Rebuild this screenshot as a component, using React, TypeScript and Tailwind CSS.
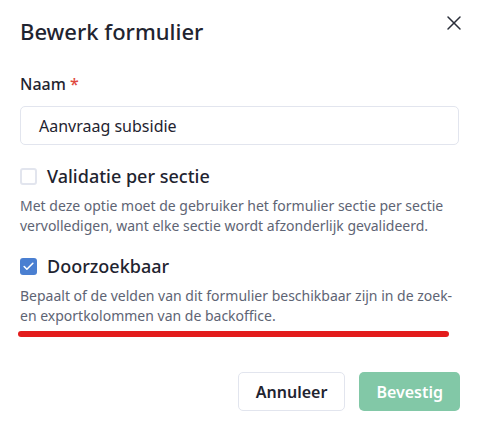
import { X, Check } from "lucide-react";

export default function App() {
  return (
    <div className="w-[479px] h-[423px] bg-white font-['Noto_Sans',sans-serif] text-[#1f2430] relative">
      <div className="px-5 pt-[15px]">
        <div className="flex items-start justify-between">
          <h1 className="text-[22px] leading-[32px] font-medium">Bewerk formulier</h1>
          <button className="mt-[-4px] mr-[-7px] text-[#2b2f3a]">
            <X size={24} strokeWidth={1.5} />
          </button>
        </div>

        <div className="mt-[26px]">
          <label className="block text-[16px] leading-[22px] font-medium">
            Naam <span className="text-[#e0483e]">*</span>
          </label>
          <div className="mt-[11px] h-[39px] border border-[#e2e5ee] rounded-[5px] flex items-center px-[18px] text-[16px]">
            Aanvraag subsidie
          </div>
        </div>

        <div className="mt-[18px]">
          <div className="flex items-center gap-[10px]">
            <div className="w-[17px] h-[17px] border-2 border-[#e2e5ee] rounded-[3px]" />
            <span className="text-[18px] leading-[26px] font-medium">Validatie per sectie</span>
          </div>
          <p className="mt-[7px] text-[14px] leading-[20px] text-[#5e6474]">
            Met deze optie moet de gebruiker het formulier sectie per sectie vervolledigen, want elke sectie wordt afzonderlijk gevalideerd.
          </p>
        </div>

        <div className="mt-[17px]">
          <div className="flex items-center gap-[10px]">
            <div className="w-[17px] h-[17px] bg-[#4a7fd1] rounded-[3px] flex items-center justify-center text-white">
              <Check size={13} strokeWidth={3} />
            </div>
            <span className="text-[18px] leading-[26px] font-medium">Doorzoekbaar</span>
          </div>
          <p className="mt-[7px] text-[14px] leading-[20px] text-[#5e6474]">
            Bepaalt of de velden van dit formulier beschikbaar zijn in de zoek- en exportkolommen van de backoffice.
          </p>
          <div className="mt-[5px] ml-[-2px] w-[431px] h-[6px] rounded-full bg-[#e31c1c]" />
        </div>

        <div className="mt-[35px] flex justify-end gap-[14px] mr-[-1px]">
          <button className="h-[39px] px-[17px] border border-[#e2e5ee] rounded-[5px] text-[16px] font-semibold text-[#1f2430]">
            Annuleer
          </button>
          <button className="h-[39px] px-[17px] bg-[#82c8a7] rounded-[5px] text-[16px] font-semibold text-white">
            Bevestig
          </button>
        </div>
      </div>
    </div>
  );
}
